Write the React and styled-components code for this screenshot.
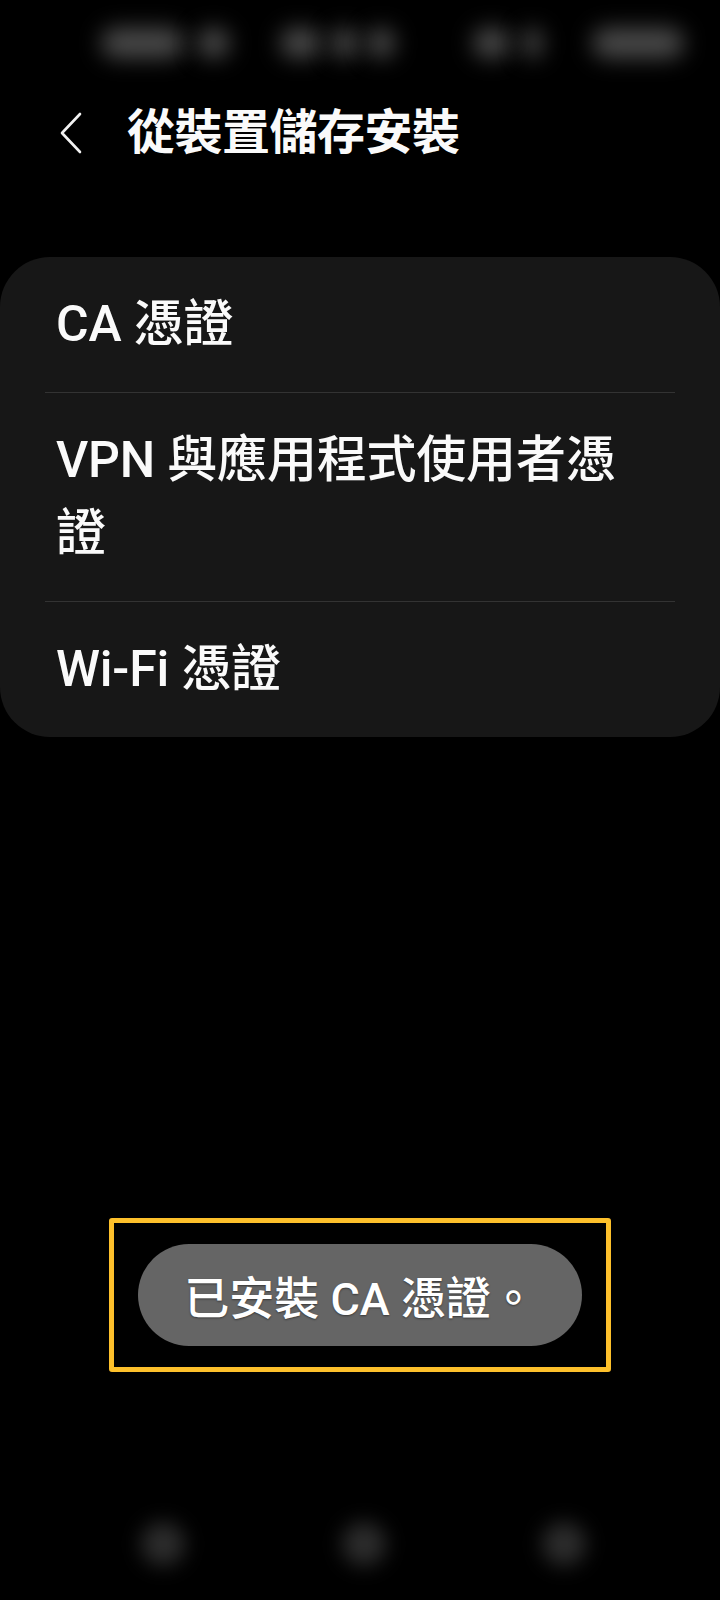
import React from "react";
import styled, { createGlobalStyle } from "styled-components";

const GlobalStyle = createGlobalStyle`
  html, body {
    margin: 0;
    padding: 0;
    background: #000;
  }
  body {
    font-family: Roboto, "Noto Sans CJK TC", sans-serif;
    -webkit-font-smoothing: antialiased;
  }
`;

const Screen = styled.div`
  width: 720px;
  height: 1600px;
  background: #000;
  color: #fafafa;
  display: flex;
  flex-direction: column;
  overflow: hidden;
`;

const StatusBar = styled.div`
  height: 86px;
  display: flex;
  align-items: center;
  padding-left: 101px;
  box-sizing: border-box;
`;

const Blur = styled.span`
  display: block;
  width: ${(p) => p.$w}px;
  height: 30px;
  margin-left: ${(p) => p.$gap || 0}px;
  border-radius: 15px;
  background: #4a4a4a;
  filter: blur(11px);
`;

const Header = styled.header`
  height: 94px;
  display: flex;
  align-items: center;
  padding-left: 56px;
  box-sizing: border-box;
`;

const BackButton = styled.button`
  width: 30px;
  height: 44px;
  padding: 0;
  border: none;
  background: none;
  color: #f2f2f2;
  display: flex;
  align-items: center;
  justify-content: center;
`;

const Title = styled.h1`
  margin: 0 0 0 41px;
  font-size: 48px;
  font-weight: 700;
  letter-spacing: -0.5px;
  line-height: 1;
`;

const Card = styled.section`
  margin-top: 77px;
  background: #171717;
  border-radius: 50px;
  display: flex;
  flex-direction: column;
`;

const Row = styled.div`
  padding: 31px 80px 31px 56px;
  font-size: 50px;
  font-weight: 500;
  line-height: 73px;
  letter-spacing: -0.2px;
`;

const Divider = styled.hr`
  margin: 0 45px;
  border: none;
  height: 1px;
  background: #333;
`;

const ToastFrame = styled.div`
  align-self: center;
  margin-top: 481px;
  border: 5px solid #fdc02b;
  border-radius: 3px;
  padding: 21px 24px;
`;

const Toast = styled.div`
  height: 102px;
  padding: 0 46px;
  border-radius: 51px;
  background: #656565;
  display: flex;
  align-items: center;
  font-size: 45px;
  font-weight: 500;
  color: #fff;
  text-shadow: 0 1px 2px rgba(0, 0, 0, 0.45);
`;

const NavBar = styled.nav`
  margin-top: 150px;
  display: flex;
  justify-content: space-between;
  padding: 0 134px 0 141px;
`;

const NavDot = styled.span`
  width: 44px;
  height: 44px;
  border-radius: 50%;
  background: #2c2c2c;
  filter: blur(10px);
`;

const Chevron = () => (
  <svg width="26" height="42" viewBox="0 0 26 42" fill="none">
    <path d="M22 2 L4 21 L22 40" stroke="currentColor" strokeWidth="2.6" strokeLinecap="round" strokeLinejoin="round" />
  </svg>
);

const items = ["CA 憑證", "VPN 與應用程式使用者憑證", "Wi-Fi 憑證"];

const App = () => {
  return (
    <>
      <GlobalStyle />
      <Screen>
        <StatusBar>
          <Blur $w={83} />
          <Blur $w={33} $gap={13} />
          <Blur $w={41} $gap={50} />
          <Blur $w={27} $gap={10} />
          <Blur $w={28} $gap={9} />
          <Blur $w={37} $gap={78} />
          <Blur $w={19} $gap={13} />
          <Blur $w={92} $gap={50} />
        </StatusBar>
        <Header>
          <BackButton aria-label="返回">
            <Chevron />
          </BackButton>
          <Title>從裝置儲存安裝</Title>
        </Header>
        <Card>
          {items.map((label, i) => (
            <React.Fragment key={label}>
              {i > 0 && <Divider />}
              <Row>{label}</Row>
            </React.Fragment>
          ))}
        </Card>
        <ToastFrame>
          <Toast>已安裝 CA 憑證。</Toast>
        </ToastFrame>
        <NavBar>
          <NavDot />
          <NavDot />
          <NavDot />
        </NavBar>
      </Screen>
    </>
  );
};

export default App;
